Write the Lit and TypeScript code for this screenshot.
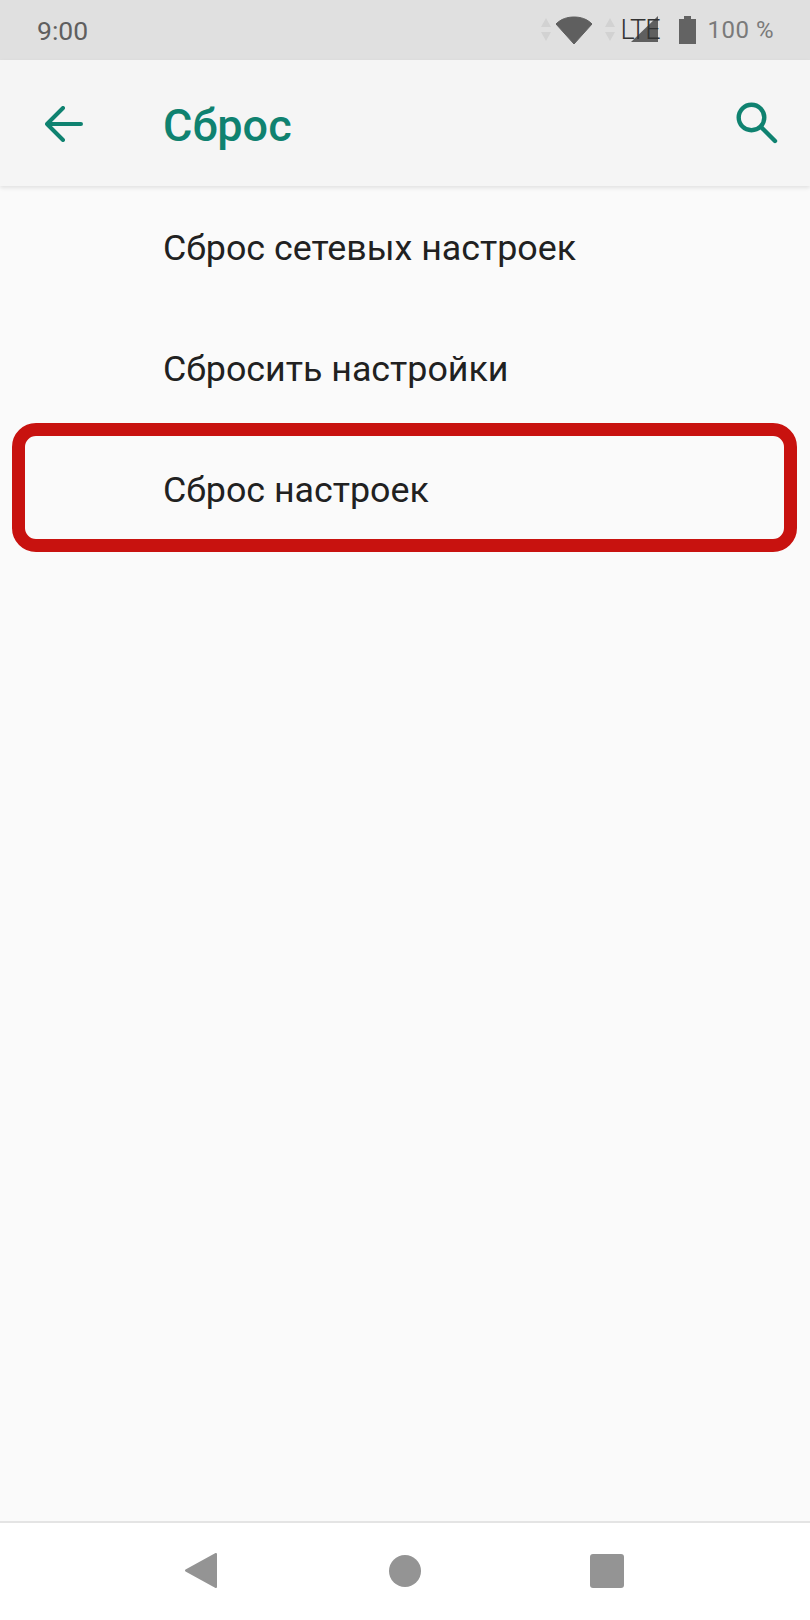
import { html, css, LitElement } from 'lit';
import { customElement } from 'lit/decorators.js';

@customElement('app-root')
export class AppRoot extends LitElement {
  static styles = css`
    :host {
      display: flex;
      flex-direction: column;
      height: 1620px;
      background: #fafafa;
      font-family: Roboto, 'Noto Sans', sans-serif;
    }
    svg {
      display: block;
      flex: none;
    }
    .status {
      height: 60px;
      flex: none;
      background: #e0e0e0;
      display: flex;
      align-items: center;
      padding: 0 36px 0 37px;
      color: #5f5f5f;
    }
    .time {
      font-size: 26.5px;
      font-weight: 400;
      margin-right: auto;
    }
    .arrows-a {
      margin-right: 5px;
    }
    .arrows-b {
      margin-left: 13px;
      margin-right: 6px;
    }
    .lte {
      position: relative;
      width: 38px;
      height: 28px;
      margin-right: 20px;
    }
    .lte span {
      position: absolute;
      left: 0;
      top: 0;
      font-size: 27px;
      line-height: 29px;
      font-weight: 300;
      color: #333;
      letter-spacing: -1px;
    }
    .lte svg {
      position: absolute;
      left: 10px;
      top: 0;
    }
    .pct {
      margin-left: 12px;
      font-size: 24px;
      letter-spacing: 0.5px;
      color: #7a7a7a;
    }
    .bar {
      height: 126px;
      flex: none;
      background: #f5f5f5;
      box-shadow: 0 2px 4px rgba(0, 0, 0, 0.1);
      display: flex;
      align-items: center;
      padding: 0 32px 0 45px;
      position: relative;
    }
    .back {
      margin-top: 2px;
    }
    .title {
      margin-left: 80px;
      padding-top: 4px;
      font-size: 45px;
      font-weight: 500;
      color: #0f8270;
      margin-right: auto;
    }
    .list {
      flex: 1;
      padding-top: 1px;
    }
    .row {
      height: 121px;
      display: flex;
      align-items: center;
      padding-left: 163px;
      font-size: 35.8px;
      color: #212121;
      position: relative;
    }
    .frame {
      position: absolute;
      left: 12px;
      right: 13px;
      top: -6px;
      bottom: -2px;
      border: 13px solid #c8120f;
      border-radius: 24px;
    }
    .nav {
      height: 95px;
      flex: none;
      background: #fff;
      border-top: 2px solid #e4e4e4;
      display: flex;
      align-items: center;
      padding-left: 184px;
      padding-bottom: 2px;
    }
    .circle {
      margin-left: 172px;
    }
    .square {
      margin-left: 169px;
    }
  `;

  render() {
    return html`
      <div class="status">
        <span class="time">9:00</span>
        <svg class="arrows-a" width="10" height="24" viewBox="0 0 10 24" fill="#d2d2d2">
          <path d="M5 0l5 9H0zM0 14h10l-5 9z" />
        </svg>
        <svg width="36" height="28" viewBox="0 0 36 28" fill="#5f5f5f">
          <path d="M0 8C5 3 11 1 18 1s13 2 18 7L18 28z" stroke="#5f5f5f" stroke-linejoin="round" />
        </svg>
        <svg class="arrows-b" width="10" height="24" viewBox="0 0 10 24" fill="#d2d2d2">
          <path d="M5 0l5 9H0zM0 14h10l-5 9z" />
        </svg>
        <div class="lte">
          <svg width="27" height="26" viewBox="0 0 27 26" fill="#5f5f5f">
            <path d="M27 0v26H0z" />
          </svg>
          <span>LTE</span>
        </div>
        <svg width="17" height="28" viewBox="0 0 17 28" fill="#636363">
          <path d="M0 3h5V0h7v3h5v25H0z" />
        </svg>
        <span class="pct">100 %</span>
      </div>

      <div class="bar">
        <svg class="back" width="38" height="36" viewBox="0 0 38 36" fill="none" stroke="#0f8270" stroke-width="4" stroke-linecap="round" stroke-linejoin="round">
          <path d="M36 18H2M18 2L2 18l16 16" />
        </svg>
        <span class="title">Сброс</span>
        <svg width="42" height="42" viewBox="0 0 42 42" fill="none" stroke="#0f8270" stroke-width="4.4" stroke-linecap="round">
          <circle cx="15.5" cy="15.5" r="12.8" />
          <path d="M25 25l14 14" />
        </svg>
      </div>

      <div class="list">
        <div class="row">Сброс сетевых настроек</div>
        <div class="row">Сбросить настройки</div>
        <div class="row">Сброс настроек<div class="frame"></div></div>
      </div>

      <div class="nav">
        <svg width="33" height="37" viewBox="0 0 33 37" fill="#949494">
          <path d="M32 2v33L2 18.500z" stroke="#949494" stroke-width="2" stroke-linejoin="round" />
        </svg>
        <svg class="circle" width="32" height="32" viewBox="0 0 32 32" fill="#949494">
          <circle cx="16" cy="16" r="16" />
        </svg>
        <svg class="square" width="34" height="34" viewBox="0 0 34 34" fill="#949494">
          <rect width="34" height="34" rx="3" />
        </svg>
      </div>
    `;
  }
}
